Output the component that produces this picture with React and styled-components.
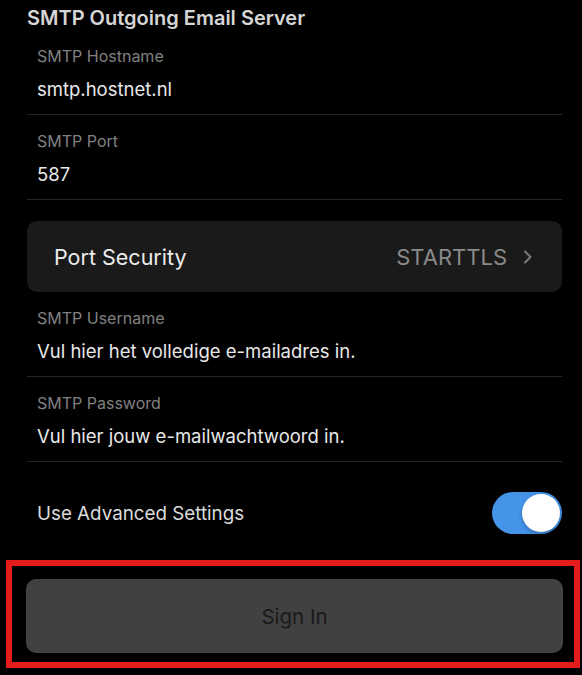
import React, { useState } from 'react';
import styled, { createGlobalStyle } from 'styled-components';

const GlobalStyle = createGlobalStyle`
    html, body {
        margin: 0;
        padding: 0;
        background-color: #000;
    }
    body {
        font-family: Inter, "Noto Sans", "Liberation Sans", sans-serif;
        -webkit-font-smoothing: antialiased;
    }
`;

const Page = styled.div`
    width: 582px;
    height: 675px;
    box-sizing: border-box;
    padding: 0 20px 0 27px;
    background-color: #000;
    overflow: hidden;
`;

const SectionTitle = styled.h2`
    margin: 6px 0 0 0;
    height: 24px;
    font-size: 20px;
    line-height: 24px;
    font-weight: 600;
    color: #d6d6d6;
`;

const Field = styled.div`
    display: flex;
    flex-direction: column;
    gap: 12px;
    padding: 16px 10px 14px 10px;
    border-bottom: 1px solid #262626;
`;

const FieldLabel = styled.label`
    font-size: 16px;
    line-height: 20px;
    color: #808080;
`;

const FieldValue = styled.div`
    font-size: 18.5px;
    line-height: 22px;
    color: #e8e8e8;
`;

const SelectRow = styled.div`
    display: flex;
    align-items: center;
    justify-content: space-between;
    height: 71px;
    margin-top: 21px;
    padding: 0 29px 0 27px;
    border-radius: 10px;
    background-color: #1a1a1a;
`;

const SelectTitle = styled.span`
    font-size: 21.5px;
    color: #ececec;
`;

const SelectValue = styled.span`
    display: flex;
    align-items: center;
    gap: 16px;
    font-size: 22px;
    color: #8a8a8a;
`;

const ToggleRow = styled.div`
    display: flex;
    align-items: center;
    justify-content: space-between;
    padding: 30px 0 0 10px;
`;

const ToggleLabel = styled.span`
    font-size: 18.8px;
    color: #dcdcdc;
`;

const Switch = styled.button`
    position: relative;
    width: 70px;
    height: 42px;
    padding: 0;
    border: none;
    border-radius: 21px;
    background-color: ${(p) => (p.$on ? '#4594ea' : '#3a3a3c')};
    cursor: pointer;
`;

const Knob = styled.span`
    position: absolute;
    top: 2px;
    left: ${(p) => (p.$on ? '30px' : '2px')};
    width: 38px;
    height: 38px;
    border-radius: 50%;
    background-color: #fff;
    box-shadow: 0 2px 4px rgba(0, 0, 0, 0.25);
`;

const Highlight = styled.div`
    margin: 26px -18px 0 -21px;
    padding: 13px 11px 9px 14px;
    border: 6px solid #e31d1d;
`;

const SignInButton = styled.button`
    display: block;
    width: 100%;
    height: 74px;
    border: none;
    border-radius: 10px;
    background-color: #414141;
    font-family: inherit;
    font-size: 20.5px;
    color: #1a1a1a;
`;

function Chevron() {
    return (
        <svg width="10" height="14" viewBox="0 0 10 14" fill="none">
            <path d="M2 1.5 L7.5 7 L2 12.5" stroke="#7a7a7a" strokeWidth="2" strokeLinecap="round" strokeLinejoin="round" />
        </svg>
    );
}

export default function App() {
    const [advanced, setAdvanced] = useState(true);
    return (
        <Page>
            <GlobalStyle />
            <SectionTitle>SMTP Outgoing Email Server</SectionTitle>
            <Field>
                <FieldLabel>SMTP Hostname</FieldLabel>
                <FieldValue>smtp.hostnet.nl</FieldValue>
            </Field>
            <Field>
                <FieldLabel>SMTP Port</FieldLabel>
                <FieldValue>587</FieldValue>
            </Field>
            <SelectRow>
                <SelectTitle>Port Security</SelectTitle>
                <SelectValue>
                    STARTTLS
                    <Chevron />
                </SelectValue>
            </SelectRow>
            <Field>
                <FieldLabel>SMTP Username</FieldLabel>
                <FieldValue>Vul hier het volledige e-mailadres in.</FieldValue>
            </Field>
            <Field>
                <FieldLabel>SMTP Password</FieldLabel>
                <FieldValue>Vul hier jouw e-mailwachtwoord in.</FieldValue>
            </Field>
            <ToggleRow>
                <ToggleLabel>Use Advanced Settings</ToggleLabel>
                <Switch $on={advanced} onClick={() => setAdvanced(!advanced)}>
                    <Knob $on={advanced} />
                </Switch>
            </ToggleRow>
            <Highlight>
                <SignInButton>Sign In</SignInButton>
            </Highlight>
        </Page>
    );
}
